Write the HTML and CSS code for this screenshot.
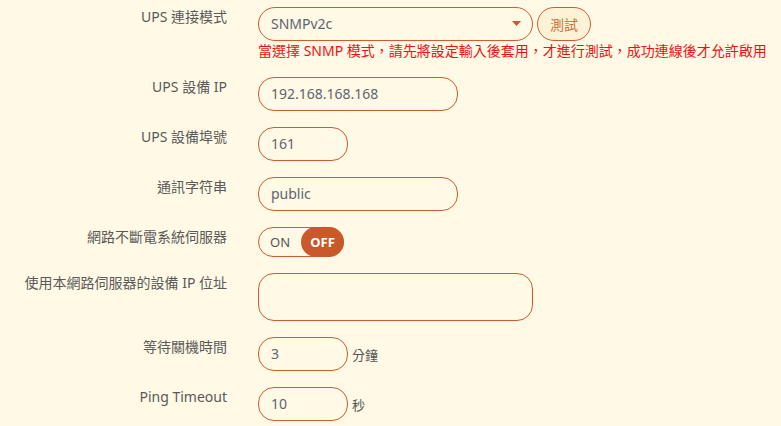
FILE: index.html
```html
<!DOCTYPE html>
<html lang="zh-Hant">
<head>
<meta charset="utf-8">
<link rel="stylesheet" href="styles.css">
</head>
<body>
<form class="form">
  <div class="row">
    <div class="label">UPS 連接模式</div>
    <div class="field">
      <div class="line">
        <div class="select">
          <span>SNMPv2c</span>
          <svg class="arrow" width="9" height="5" viewBox="0 0 9 5"><path d="M0 0H9L4.5 5Z" fill="#c8582b"/></svg>
        </div>
        <button type="button" class="btn">測試</button>
      </div>
      <div class="hint">當選擇 SNMP 模式，請先將設定輸入後套用，才進行測試，成功連線後才允許啟用</div>
    </div>
  </div>
  <div class="row">
    <div class="label">UPS 設備 IP</div>
    <div class="field"><div class="input w200">192.168.168.168</div></div>
  </div>
  <div class="row">
    <div class="label">UPS 設備埠號</div>
    <div class="field"><div class="input w90">161</div></div>
  </div>
  <div class="row">
    <div class="label">通訊字符串</div>
    <div class="field"><div class="input w200">public</div></div>
  </div>
  <div class="row">
    <div class="label">網路不斷電系統伺服器</div>
    <div class="field">
      <div class="toggle"><span class="on">ON</span><span class="off">OFF</span></div>
    </div>
  </div>
  <div class="row">
    <div class="label">使用本網路伺服器的設備 IP 位址</div>
    <div class="field"><div class="textarea"></div></div>
  </div>
  <div class="row">
    <div class="label">等待關機時間</div>
    <div class="field line"><div class="input w90">3</div><span class="unit">分鐘</span></div>
  </div>
  <div class="row">
    <div class="label">Ping Timeout</div>
    <div class="field line"><div class="input w90">10</div><span class="unit">秒</span></div>
  </div>
</form>
</body>
</html>
```
FILE: styles.css
```css
html, body {
  margin: 0;
  padding: 0;
  background: #fff9e6;
}
body {
  font-family: "Noto Sans", "Noto Sans CJK TC", sans-serif;
  font-size: 14px;
  color: #555;
}
.form {
  padding-top: 7px;
}
.row {
  display: flex;
  align-items: flex-start;
  margin-bottom: 16px;
}
.label {
  width: 227px;
  height: 20px;
  flex: none;
  text-align: right;
  line-height: 20px;
  white-space: nowrap;
  color: #5a5a5a;
}
.field {
  margin-left: 31px;
}
.line {
  display: flex;
  align-items: center;
}
.select {
  box-sizing: border-box;
  width: 275px;
  height: 34px;
  border: 1px solid #cc5d2e;
  border-radius: 17px;
  display: flex;
  align-items: center;
  justify-content: space-between;
  padding: 0 11px 0 12px;
  line-height: 20px;
  color: #5c6570;
}
.arrow {
  display: block;
  margin-top: -1px;
}
.btn {
  box-sizing: border-box;
  margin-left: 4px;
  width: 54px;
  height: 34px;
  border: 1px solid #cc5d2e;
  border-radius: 17px;
  background: #fdf1d6;
  color: #c9733d;
  font-family: "Noto Sans CJK TC", sans-serif;
  font-size: 14px;
  padding: 0;
  line-height: 20px;
}
.hint {
  height: 20px;
  line-height: 20px;
  color: #ee1111;
  white-space: nowrap;
}
.input {
  box-sizing: border-box;
  height: 34px;
  border: 1px solid #cc5d2e;
  border-radius: 16px;
  padding: 0 12px;
  display: flex;
  align-items: center;
  line-height: 20px;
  color: #5c6570;
}
.w200 { width: 200px; }
.w90 { width: 90px; }
.unit {
  margin-left: 4px;
  font-size: 13px;
  color: #555;
}
.toggle {
  box-sizing: border-box;
  width: 86px;
  height: 30px;
  border: 1px solid #cc5d2e;
  border-radius: 15px;
  display: flex;
  align-items: stretch;
}
.toggle .on {
  flex: 1;
  display: flex;
  align-items: center;
  padding-left: 11px;
  font-size: 13px;
  color: #555;
}
.toggle .off {
  width: 43px;
  margin: -1px -1px -1px 0;
  border-radius: 15px;
  background: #c9582a;
  color: #fff;
  font-weight: 700;
  font-size: 13px;
  display: flex;
  align-items: center;
  justify-content: center;
}
.textarea {
  box-sizing: border-box;
  width: 275px;
  height: 48px;
  border: 1px solid #cc5d2e;
  border-radius: 16px;
}
```
